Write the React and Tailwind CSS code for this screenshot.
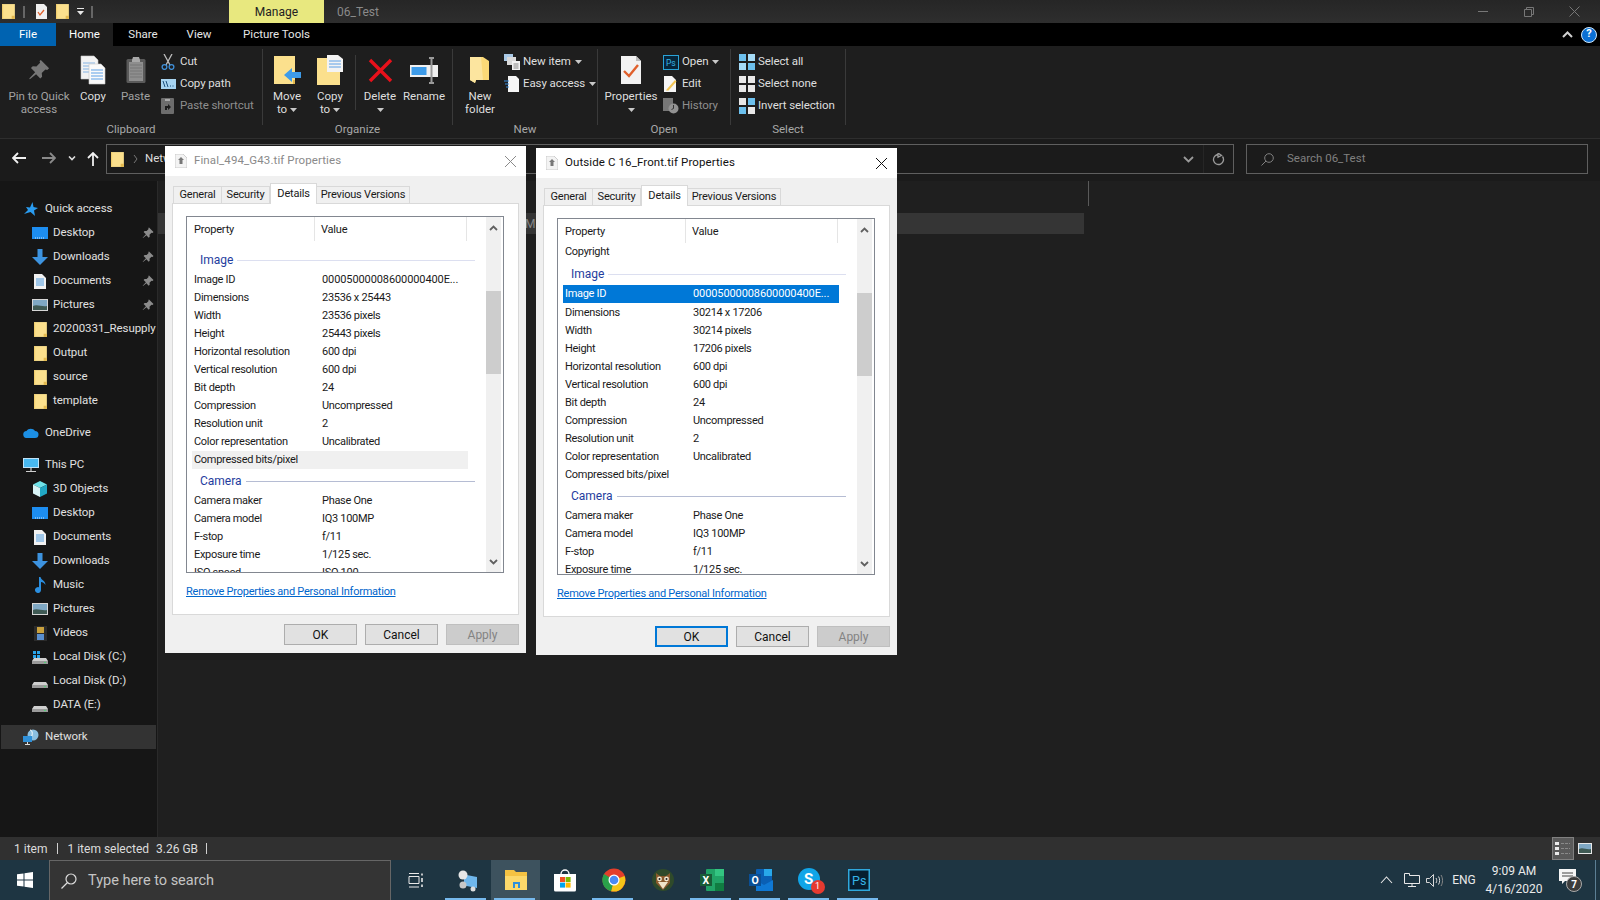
import React from "react";

const FONT = "font-['Roboto','Liberation_Sans',sans-serif]";

const Folder = ({ s = 16, className = "" }) => (
  <svg width={s} height={s} viewBox="0 0 16 16" className={className}>
    <path d="M2 1h12v14H2z" fill="#fbe08d" />
    <path d="M11 15v-3h3v3z" fill="#e3b94f" />
    <path d="M2 1h1v14H2z" fill="#f4cf6d" />
  </svg>
);

const Pin = ({ c = "#8b8b8b", s = 12 }) => (
  <svg width={s} height={s} viewBox="0 0 12 12">
    <path d="M7 0.5l4.5 4.5-1 1-1-.3-2 2 .2 2-1 1-2.3-2.4L1 11l-.3-.3 3.2-3.5-2.3-2.3 1-1 2 .2 2-2-.3-1z" fill={c} />
  </svg>
);

const CopyIco = () => (
  <svg width="26" height="30" viewBox="0 0 26 30">
    <path d="M1 1h13l4 4v19H1z" fill="#f3f3f3" stroke="#c9c9c9" strokeWidth=".6" />
    <path d="M3 8h12M3 11h12M3 14h8M3 17h8" stroke="#84b3e3" />
    <path d="M9 9h12l4 4v16H9z" fill="#fafafa" stroke="#c9c9c9" strokeWidth=".6" />
    <path d="M11 15h12M11 18h12M11 21h12M11 24h12" stroke="#5ca0e6" />
  </svg>
);

const PasteIco = () => (
  <svg width="20" height="28" viewBox="0 0 20 28">
    <rect x="0.5" y="3" width="19" height="24" rx="1.5" fill="#5a5a5a" />
    <rect x="3" y="6" width="14" height="19" fill="#8e8e8e" />
    <path d="M4 9h12M4 12h12M4 15h12M4 18h12M4 21h12" stroke="#777" />
    <path d="M6 4l1-3h6l1 3v2H6z" fill="#a8a8a8" />
  </svg>
);

const Caret = ({ className = "" }) => (
  <svg width="7" height="4" viewBox="0 0 7 4" className={`inline-block align-middle ${className}`}>
    <path d="M0 0h7L3.5 4z" fill="#c8c8c8" />
  </svg>
);

const Large = ({ w, label, label2, arrow, icon, dim }) => (
  <div className={`flex flex-col items-center shrink-0 ${w}`}>
    <div className="h-[32px] mt-[5px] flex items-center justify-center">{icon}</div>
    <div className={`mt-[4px] text-center text-[11.5px] leading-[13px] whitespace-nowrap ${dim ? "text-[#a2a2a2]" : "text-[#dedede]"}`}>
      <div>{label}</div>
      {label2 && (
        <div>
          {label2}
          {arrow && <Caret className="ml-[3px]" />}
        </div>
      )}
      {!label2 && arrow && <div className="h-[13px] flex items-center justify-center"><Caret /></div>}
    </div>
  </div>
);

const Small = ({ icon, label, dim, caret }) => (
  <div className="h-[22px] flex items-center whitespace-nowrap">
    <span className="w-[19px] h-[16px] flex items-center justify-start shrink-0">{icon}</span>
    <span className={`text-[11.5px] tracking-[-.1px] ${dim ? "text-[#8e8e8e]" : "text-[#dedede]"}`}>{label}</span>
    {caret && <Caret className="ml-[4px]" />}
  </div>
);

const Group = ({ w, label, children }) => (
  <div className={`relative flex flex-col shrink-0 ${w} border-r border-[#3a3a3a] h-[76px] mt-[3px]`}>
    <div className="flex h-full">{children}</div>
    <div className="absolute left-0 right-0 top-[73px] h-[16px] flex items-center justify-center text-[11.5px] text-[#a8a8a8]">{label}</div>
  </div>
);

const SelIco = ({ cells }) => (
  <svg width="16" height="16" viewBox="0 0 16 16">
    {[[0, 0], [9, 0], [0, 9], [9, 9]].map(([x, y], i) => (
      <rect key={i} x={x} y={y} width="7" height="7" fill={cells[i]} />
    ))}
  </svg>
);

const Ribbon = () => (
  <div className="h-[93px] bg-[#1e1e1e] border-b border-[#2e2e2e] flex items-start shrink-0">
    <Group w="w-[263px]" label="Clipboard">
      <div className="w-[4px]" />
      <Large w="w-[70px]" label="Pin to Quick" label2="access" dim icon={<svg width="22" height="22" viewBox="0 0 12 12"><path d="M7 0.5l4.5 4.5-1 1-1-.3-2 2 .2 2-1 1-2.3-2.4L1 11l-.3-.3 3.2-3.5-2.3-2.3 1-1 2 .2 2-2-.3-1z" fill="#777" /></svg>} />
      <Large w="w-[38px]" label="Copy" icon={<CopyIco />} />
      <Large w="w-[47px]" label="Paste" dim icon={<PasteIco />} />
      <div className="ml-[2px] mt-[2px] flex flex-col">
        <Small label="Cut" icon={<svg width="14" height="16" viewBox="0 0 14 16"><path d="M3 0l6 11M11 0L5 11" stroke="#bdbdbd" strokeWidth="1.3" /><circle cx="3.5" cy="13" r="2.4" fill="none" stroke="#3f8fd8" strokeWidth="1.3" /><circle cx="10.5" cy="13" r="2.4" fill="none" stroke="#3f8fd8" strokeWidth="1.3" /></svg>} />
        <Small label="Copy path" icon={<svg width="15" height="10" viewBox="0 0 15 10"><rect width="15" height="10" fill="#a8d4f0" /><path d="M2 2l2 6M5 2l2 6M9 7h1M11.5 7h1" stroke="#1b4e7a" /></svg>} />
        <Small label="Paste shortcut" dim icon={<svg width="13" height="16" viewBox="0 0 13 16"><rect width="13" height="16" rx="1" fill="#6d6d6d" /><path d="M4 1h5v2H4z" fill="#aaa" /><path d="M4 12V8h3V6l3 3-3 3v-2H6v2z" fill="#1c1c1c" /></svg>} />
      </div>
    </Group>
    <Group w="w-[190px]" label="Organize">
      <div className="w-[1px]" />
      <Large w="w-[46px]" label="Move" label2="to" arrow icon={<svg width="27" height="28" viewBox="0 0 27 28"><path d="M0 0h21v28H0z" fill="#fbe08d" /><path d="M19 24v4h2v-4z" fill="#e3b94f" /><path d="M10 20l8-7v4h9v6h-9v4z" fill="#3d9be9" transform="translate(0 -1)" /></svg>} />
      <Large w="w-[40px]" label="Copy" label2="to" arrow icon={<svg width="27" height="30" viewBox="0 0 27 30"><path d="M0 3h23v27H0z" fill="#fbe08d" /><path d="M10 0h11l5 4v13H10z" fill="#f3f3f3" /><path d="M12 6h12M12 9h12M12 12h12" stroke="#5ca0e6" /></svg>} />
      <div className="w-[7px] pl-[5px]"><div className="w-px h-[55px] mt-[6px] bg-[#3a3a3a]" /></div>
      <Large w="w-[46px]" label="Delete" arrow icon={<svg width="25" height="25" viewBox="0 0 25 25"><path d="M2 2l21 21M23 2L2 23" stroke="#e8111b" strokeWidth="3.4" /></svg>} />
      <Large w="w-[42px]" label="Rename" icon={<svg width="28" height="27" viewBox="0 0 28 27"><rect y="8" width="28" height="12" fill="#f0f0f0" /><rect x="1.500" y="10" width="15" height="8" fill="#3d9be9" /><path d="M19 1h5M21.500 1v25M19 26h5" stroke="#9a9a9a" strokeWidth="2" /></svg>} />
    </Group>
    <Group w="w-[145px]" label="New">
      <div className="w-[4px]" />
      <Large w="w-[46px]" label="New" label2="folder" icon={<svg width="20" height="28" viewBox="0 0 20 28"><path d="M0 1h13l6 4v19H6l-1 3-5-3z" fill="#fbd977" /><path d="M0 1h11l2 23H6l-1 3-5-3z" fill="#fce59f" /></svg>} />
      <div className="ml-[1px] mt-[2px] flex flex-col">
        <Small label="New item" caret icon={<svg width="16" height="16" viewBox="0 0 16 16"><rect y="0" width="9" height="7" fill="#a9c9e6" /><rect x="3" y="3" width="9" height="8" fill="#d9d9d9" /><rect x="8" y="7" width="8" height="9" fill="#f2f2f2" /><path d="M9.500 10h5M9.500 12h5M9.500 14h5" stroke="#888" /></svg>} />
        <Small label="Easy access" caret icon={<svg width="16" height="16" viewBox="0 0 16 16"><path d="M4 0h8l3 3v13H4z" fill="#f5f5f5" /><path d="M0 5h5M1 8h4M2 11h3" stroke="#3d8fe0" /></svg>} />
      </div>
    </Group>
    <Group w="w-[133px]" label="Open">
      <div className="w-[2px]" />
      <Large w="w-[62px]" label="Properties" arrow icon={<svg width="22" height="28" viewBox="0 0 22 28"><path d="M1 0h15l5 5v23H1z" fill="#f2f2f2" /><path d="M16 0v5h5z" fill="#bbb" /><path d="M4 15l5 5 9-11" stroke="#e0602c" strokeWidth="2.400" fill="none" /></svg>} />
      <div className="ml-[1px] mt-[2px] flex flex-col">
        <Small label="Open" caret icon={<svg width="16" height="15" viewBox="0 0 16 15"><rect x=".5" y=".5" width="15" height="14" fill="#07253a" stroke="#29a3d8" /><text x="3" y="11" fontSize="8.500" fontFamily="Roboto" fill="#36b4e8">Ps</text></svg>} />
        <Small label="Edit" icon={<svg width="14" height="16" viewBox="0 0 14 16"><path d="M1 0h8l4 4v12H1z" fill="#f5f5f5" /><path d="M4 13l8-9 1.500 1.500-8 9H3z" fill="#f1c453" /></svg>} />
        <Small label="History" dim icon={<svg width="16" height="16" viewBox="0 0 16 16"><rect width="10" height="13" fill="#777" /><circle cx="10.500" cy="10.500" r="5" fill="#929292" /><path d="M10.500 7v3.500l-2 1" stroke="#333" fill="none" /></svg>} />
      </div>
    </Group>
    <Group w="w-[115px]" label="Select">
      <div className="ml-[8px] mt-[2px] flex flex-col">
        <Small label="Select all" icon={<SelIco cells={["#6cc0ee", "#a5dbf7", "#a5dbf7", "#6cc0ee"]} />} />
        <Small label="Select none" icon={<SelIco cells={["#e8e8e8", "#e8e8e8", "#e8e8e8", "#e8e8e8"]} />} />
        <Small label="Invert selection" icon={<SelIco cells={["#e8e8e8", "#6cc0ee", "#6cc0ee", "#e8e8e8"]} />} />
      </div>
    </Group>
  </div>
);

const TitleBar = () => (
  <div className="h-[23px] bg-gradient-to-b from-[#262626] to-[#2e2e2e] flex items-center shrink-0 relative">
    <Folder s={17} />
    <div className="ml-[6px] w-[2px] h-[12px] bg-[#666]" />
    <svg width="13" height="15" viewBox="0 0 13 15" className="ml-[10px]"><path d="M1 0h8l3 3v12H1z" fill="#f0f0f0" /><path d="M3 8l2 3 4-5" stroke="#e0602c" strokeWidth="1.300" fill="none" /></svg>
    <Folder s={17} className="ml-[6px]" />
    <svg width="7" height="7" viewBox="0 0 7 7" className="ml-[6px]"><path d="M0 0h7v1H0zM0 3h7L3.500 7z" fill="#e8e8e8" /></svg>
    <div className="ml-[7px] w-[2px] h-[12px] bg-[#666]" />
    <div className="ml-[136px] w-[95px] h-full bg-[#e8e87f] flex items-center justify-center text-[12px] text-[#222]">Manage</div>
    <div className="ml-[13px] text-[12px] text-[#8a8a8a]">06_Test</div>
    <div className="ml-auto flex items-center">
      <div className="w-[46px] flex justify-center"><div className="w-[10px] h-px bg-[#777]" /></div>
      <div className="w-[46px] flex justify-center">
        <svg width="10" height="10" viewBox="0 0 10 10"><path d="M.5 2.500h7v7h-7zM2.500 2.500v-2h7v7h-2" fill="none" stroke="#777" /></svg>
      </div>
      <div className="w-[45px] flex justify-center mr-[3px]">
        <svg width="11" height="11" viewBox="0 0 11 11"><path d="M.5.5l10 10M10.500.5l-10 10" stroke="#777" /></svg>
      </div>
    </div>
  </div>
);

const Tabs = () => (
  <div className="h-[23px] bg-black flex items-center text-[11.5px] text-[#e6e6e6] shrink-0">
    <div className="w-[56px] h-full bg-[#0063b1] flex items-center justify-center text-white">File</div>
    <div className="w-[57px] h-full bg-[#1e1e1e] flex items-center justify-center text-white">Home</div>
    <div className="w-[60px] text-center">Share</div>
    <div className="w-[52px] text-center">View</div>
    <div className="w-[95px] text-center ml-[4px]">Picture Tools</div>
    <div className="ml-auto mr-[8px]">
      <svg width="11" height="7" viewBox="0 0 11 7"><path d="M1 6l4.500-4.500L10 6" stroke="#d0d0d0" strokeWidth="2" fill="none" /></svg>
    </div>
    <div className="mr-[3px] w-[16px] h-[16px] rounded-full bg-[#0b6fd3] border border-[#cfe6fa] text-white text-[11px] font-bold flex items-center justify-center">?</div>
  </div>
);

const Nav = () => (
  <div className="h-[42px] bg-[#1b1b1b] flex items-start pt-[5px] shrink-0 relative border-b border-transparent">
    <svg width="14" height="12" viewBox="0 0 14 12" className="ml-[12px] mt-[8px]"><path d="M6 1L1 6l5 5M1 6h13" stroke="#f0f0f0" strokeWidth="1.800" fill="none" /></svg>
    <svg width="14" height="12" viewBox="0 0 14 12" className="ml-[16px] mt-[8px]"><path d="M8 1l5 5-5 5M13 6H0" stroke="#8a8a8a" strokeWidth="1.800" fill="none" /></svg>
    <svg width="8" height="5" viewBox="0 0 8 5" className="ml-[12px] mt-[12px]"><path d="M1 .5l3 3 3-3" stroke="#dcdcdc" strokeWidth="1.600" fill="none" /></svg>
    <svg width="12" height="14" viewBox="0 0 12 14" className="ml-[11px] mt-[8px]"><path d="M1 6l5-5 5 5M6 1v13" stroke="#f0f0f0" strokeWidth="1.800" fill="none" /></svg>
    <div className="ml-[7px] w-[1128px] h-[30px] border border-[#5f5f5f] flex items-center text-[11.5px] text-[#dcdcdc]">
      <Folder s={17} className="ml-[2px]" />
      <svg width="5" height="8" viewBox="0 0 5 8" className="ml-[7px]"><path d="M1 0l3 4-3 4" stroke="#777" fill="none" /></svg>
      <span className="ml-[7px]">Network</span>
      <svg width="11" height="7" viewBox="0 0 11 7" className="ml-auto mr-[9px]"><path d="M1 1l4.500 4.500L10 1" stroke="#9a9a9a" strokeWidth="1.800" fill="none" /></svg>
      <div className="w-px h-full bg-[#262626]" />
      <svg width="13" height="13" viewBox="0 0 13 13" className="mx-[8px]"><path d="M10.500 3.500A5 5 0 1 1 6.500 1.500M6 0v4.200l3.500-1.700z" stroke="#9a9a9a" strokeWidth="1.300" fill="none" /></svg>
    </div>
    <div className="ml-[12px] w-[342px] h-[30px] border border-[#5f5f5f] flex items-center text-[11.5px] text-[#808080]">
      <svg width="13" height="13" viewBox="0 0 13 13" className="ml-[14px]"><circle cx="8" cy="5" r="4.300" fill="none" stroke="#808080" /><path d="M5 8l-4.500 4.500" stroke="#808080" /></svg>
      <span className="ml-[13px]">Search 06_Test</span>
    </div>
  </div>
);

const Desk = () => <svg width="16" height="12" viewBox="0 0 16 12"><rect width="16" height="12" fill="#1d8df0" /><path d="M3 11h10" stroke="#cfe8ff" strokeDasharray="1 1" /></svg>;
const Down = () => <svg width="16" height="16" viewBox="0 0 16 16"><path d="M5.500 0h5v8H16l-8 8-8-8h5.500z" fill="#3d93df" /></svg>;
const Docs = () => <svg width="12" height="15" viewBox="0 0 12 15"><path d="M0 0h8l4 4v11H0z" fill="#f1f1f1" /><path d="M2 5h8M2 7h8M2 9h8M2 11h8" stroke="#4f9ce0" /></svg>;
const Pics = () => <svg width="16" height="12" viewBox="0 0 16 12"><rect width="16" height="12" fill="#d6d6d6" /><rect x="1" y="1" width="14" height="10" fill="#7fa8c4" /><path d="M1 7c4-2 9 1 14 0v4H1z" fill="#3f5a54" /></svg>;
const Disk = ({ win }) => <svg width="16" height="14" viewBox="0 0 16 14"><path d="M2 8h12l2 3v3H0v-3z" fill="#cfcfcf" /><rect x="0" y="11" width="16" height="3" fill="#9a9a9a" /><circle cx="13" cy="12.500" r=".8" fill="#3fe06e" />{win && <path d="M1 1h3v3H1zM5 1h3v3H5zM1 5h3v3H1zM5 5h3v3H5z" fill="#29a3e8" />}</svg>;

const TreeRow = ({ label, icon, pin, top, active, mt }) => (
  <div className={`h-[24px] flex items-center whitespace-nowrap ${mt || ""} ${active ? "bg-[#333] h-[22px] my-px w-[155px] ml-[1px]" : ""}`}>
    <span className={`flex justify-center shrink-0 ${top ? (active ? "ml-[20px]" : "ml-[21px]") : "ml-[30px]"} w-[20px]`}>{icon}</span>
    <span className={`text-[11.5px] tracking-[-.05px] text-[#e0e0e0] ${top ? "ml-[4px]" : "ml-[3px]"}`}>{label}</span>
    {pin && <span className="ml-auto mr-[3px]"><Pin /></span>}
  </div>
);

const Sidebar = () => (
  <div className="w-[158px] shrink-0 bg-[#161616] border-r border-[#2a2a2a] pt-[16px] overflow-hidden">
    <TreeRow top label="Quick access" icon={<svg width="14" height="14" viewBox="0 0 14 14"><path d="M8.500 0l1 5 4.500 1-4 2.500L11 14 6.500 10 0 12l4-4-2-3 4 .5z" fill="#2a9cf0" /></svg>} />
    <TreeRow label="Desktop" icon={<Desk />} pin />
    <TreeRow label="Downloads" icon={<Down />} pin />
    <TreeRow label="Documents" icon={<Docs />} pin />
    <TreeRow label="Pictures" icon={<Pics />} pin />
    <TreeRow label="20200331_Resupply" icon={<Folder s={17} />} />
    <TreeRow label="Output" icon={<Folder s={17} />} />
    <TreeRow label="source" icon={<Folder s={17} />} />
    <TreeRow label="template" icon={<Folder s={17} />} />
    <TreeRow top mt="mt-[8px]" label="OneDrive" icon={<svg width="16" height="10" viewBox="0 0 16 10"><path d="M4 10a3.500 3.500 0 0 1-.5-7A5 5 0 0 1 12 3a3.500 3.500 0 0 1 0 7z" fill="#1c8fe4" /></svg>} />
    <TreeRow top mt="mt-[8px]" label="This PC" icon={<svg width="16" height="14" viewBox="0 0 16 14"><rect width="16" height="10" fill="#bfe2f8" /><rect x="1" y="1" width="14" height="8" fill="#48b8f0" /><path d="M8 10v3M3 13.500h10" stroke="#cfcfcf" strokeWidth="1.200" /></svg>} />
    <TreeRow label="3D Objects" icon={<svg width="16" height="16" viewBox="0 0 16 16"><path d="M8 0l7 3.500L8 7 1 3.500z" fill="#6fe3ea" /><path d="M1 3.500L8 7v9l-7-3.500z" fill="#d8f4f6" /><path d="M15 3.500L8 7v9l7-3.500z" fill="#21a7c4" /></svg>} />
    <TreeRow label="Desktop" icon={<Desk />} />
    <TreeRow label="Documents" icon={<Docs />} />
    <TreeRow label="Downloads" icon={<Down />} />
    <TreeRow label="Music" icon={<svg width="11" height="16" viewBox="0 0 11 16"><path d="M4 0h1.500c.5 3 5 3.500 5 8-1-2-3-3-4.500-3v8a3 3 0 1 1-2-2.800z" fill="#2b8fe0" /></svg>} />
    <TreeRow label="Pictures" icon={<Pics />} />
    <TreeRow label="Videos" icon={<svg width="13" height="15" viewBox="0 0 13 15"><rect width="13" height="15" fill="#2b2b2b" /><rect x="3" y="1" width="7" height="6" fill="#c9a13e" /><rect x="3" y="8" width="7" height="6" fill="#5a8fcf" /></svg>} />
    <TreeRow label="Local Disk (C:)" icon={<Disk win />} />
    <TreeRow label="Local Disk (D:)" icon={<Disk />} />
    <TreeRow label="DATA (E:)" icon={<Disk />} />
    <div className="h-[7px]" />
    <TreeRow top active label="Network" icon={<svg width="16" height="16" viewBox="0 0 16 16"><circle cx="10" cy="6" r="5.500" fill="#8bbfe0" /><path d="M7 1c3 0 3 6 0 9" stroke="#fff" fill="none" /><rect y="7" width="9" height="6" fill="#2f90d8" /><path d="M4.500 13v2M2 15.500h5" stroke="#ddd" /></svg>} />
  </div>
);

const Row = ({ k, v, sel, hl, id }) => (
  <div className={`h-[18px] flex items-center text-[11px] tracking-[-.3px] ${sel ? "bg-[#0078d7] text-white h-[17px] mb-px" : "text-[#1a1a1a]"} ${hl ? "bg-[#f0f0f0]" : ""} w-[276px] ml-[5px] shrink-0`}>
    <span className="w-[130px] pl-[2px] shrink-0 whitespace-nowrap">{k}</span>
    <span className={`whitespace-nowrap ${id ? "tracking-[-.1px]" : ""}`}>{v}</span>
  </div>
);

const Sect = ({ label, mt = "", mb = "", c }) => (
  <div className={`h-[18px] flex items-center ml-[13px] w-[275px] shrink-0 ${mt} ${mb}`}>
    <span className="text-[12px] text-[#1f3d9e] shrink-0">{label}</span>
    <div className={`ml-[4px] flex-1 h-px ${c}`} />
  </div>
);

const Dlg = ({ title, active, pos, body }) => (
  <div className={`absolute ${pos} w-[361px] h-[507px] bg-[#f0f0f0] flex flex-col ${FONT}`}>
    <div className="h-[30px] bg-white shrink-0 flex items-center">
      <svg width="12" height="14" viewBox="0 0 12 14" className="ml-[10px]"><path d="M0 0h8l4 4v10H0z" fill="#f3f3f3" stroke="#bbb" strokeWidth=".7" /><path d="M6 3l3 3H7.500v4h-3V6H3z" fill="#777" /></svg>
      <span className={`ml-[7px] text-[11.5px] tracking-[.1px] ${active ? "text-[#111]" : "text-[#8a8a8a]"}`}>{title}</span>
      <svg width="13" height="13" viewBox="0 0 13 13" className="ml-auto mr-[9px]"><path d="M1 1l11 11M12 1L1 12" stroke={active ? "#111" : "#8a8a8a"} /></svg>
    </div>
    <div className="h-[27px] shrink-0 flex items-end pl-[8px] text-[11px] tracking-[-.2px] text-[#1a1a1a] relative z-10 whitespace-nowrap">
      <div className="h-[17px] w-[49px] border border-[#d9d9d9] border-b-0 flex items-center justify-center">General</div>
      <div className="h-[17px] w-[48px] border-t border-r border-[#d9d9d9] flex items-center justify-center">Security</div>
      <div className="h-[21px] w-[47px] bg-white border-x border-t border-[#d9d9d9] -mb-px flex items-start pt-[2px] justify-center">Details</div>
      <div className="h-[17px] w-[93px] border-t border-r border-[#d9d9d9] flex items-center justify-center">Previous Versions</div>
    </div>
    <div className="mx-[7px] h-[412px] bg-white border border-[#d9d9d9] shrink-0 pl-[13px] pt-[12px]">
      <div className="w-[318px] h-[357px] border border-[#828790] flex overflow-hidden relative pr-[2px]">
        <div className="flex flex-col w-[299px] overflow-hidden">
          <div className="h-[22px] flex text-[11px] tracking-[-.2px] text-[#1a1a1a] shrink-0 items-start relative">
            <span className="w-[128px] pl-[7px] border-r border-[#e5e5e5] h-[24px] pt-[5px]">Property</span>
            <span className="w-[152px] pl-[6px] border-r border-[#e5e5e5] h-[24px] pt-[5px]">Value</span>
          </div>
          {body}
        </div>
        <div className="w-[15px] bg-[#f0f0f0] flex flex-col items-center relative ml-auto">
          <svg width="9" height="6" viewBox="0 0 9 6" className="mt-[8px]"><path d="M1 5l3.500-3.500L8 5" stroke="#606060" strokeWidth="1.800" fill="none" /></svg>
          <div className="w-[15px] h-[83px] bg-[#cdcdcd] mt-[60px]" />
          <svg width="9" height="6" viewBox="0 0 9 6" className="mt-auto mb-[7px]"><path d="M1 1l3.500 3.500L8 1" stroke="#606060" strokeWidth="1.800" fill="none" /></svg>
        </div>
      </div>
      <div className="mt-[11px] text-[11px] tracking-[-.24px] text-[#0066cc] underline whitespace-nowrap">Remove Properties and Personal Information</div>
    </div>
    <div className="flex justify-end gap-[8px] pr-[7px] pt-[9px] text-[12px]">
      <div className={`w-[73px] h-[21px] bg-[#e1e1e1] flex items-center justify-center text-[#111] border ${active ? "border-[#0078d7] border-2" : "border-[#adadad]"}`}>OK</div>
      <div className="w-[73px] h-[21px] bg-[#e1e1e1] border border-[#adadad] flex items-center justify-center text-[#111]">Cancel</div>
      <div className="w-[73px] h-[21px] bg-[#cccccc] border border-[#bfbfbf] flex items-center justify-center text-[#838383]">Apply</div>
    </div>
  </div>
);

const Common = () => (
  <>
    <Row k="Horizontal resolution" v="600 dpi" />
    <Row k="Vertical resolution" v="600 dpi" />
    <Row k="Bit depth" v="24" />
    <Row k="Compression" v="Uncompressed" />
    <Row k="Resolution unit" v="2" />
    <Row k="Color representation" v="Uncalibrated" />
  </>
);

const Body1 = (
  <>
    <div className="h-[12px] shrink-0" />
    <Sect label="Image" c="bg-[#dcdff0]" mb="mb-[2px]" />
    <Row k="Image ID" v="00005000008600000400E..." id />
    <Row k="Dimensions" v="23536 x 25443" />
    <Row k="Width" v="23536 pixels" />
    <Row k="Height" v="25443 pixels" />
    {Common()}
    <Row k="Compressed bits/pixel" v="" hl />
    <Sect label="Camera" c="bg-[#b5bcd3]" mt="mt-[3px]" mb="mb-[2px]" />
    <Row k="Camera maker" v="Phase One" />
    <Row k="Camera model" v="IQ3 100MP" />
    <Row k="F-stop" v="f/11" />
    <Row k="Exposure time" v="1/125 sec." />
    <Row k="ISO speed" v="ISO 100" />
  </>
);

const Body2 = (
  <>
    <div className="h-[2px] shrink-0" />
    <Row k="Copyright" v="" />
    <Sect label="Image" c="bg-[#dcdff0]" mt="mt-[4px]" mb="mb-[2px]" />
    <Row k="Image ID" v="00005000008600000400E..." sel id />
    <Row k="Dimensions" v="30214 x 17206" />
    <Row k="Width" v="30214 pixels" />
    <Row k="Height" v="17206 pixels" />
    {Common()}
    <Row k="Compressed bits/pixel" v="" />
    <Sect label="Camera" c="bg-[#b5bcd3]" mt="mt-[3px]" mb="mb-[2px]" />
    <Row k="Camera maker" v="Phase One" />
    <Row k="Camera model" v="IQ3 100MP" />
    <Row k="F-stop" v="f/11" />
    <Row k="Exposure time" v="1/125 sec." />
  </>
);

const TB = ({ w = "w-[49px]", on, active, children }) => (
  <div className={`${w} h-full relative flex items-center justify-center shrink-0 ${active ? "bg-[#3d525e]" : ""}`}>
    {children}
    {on && <div className="absolute bottom-0 left-[3px] right-[5px] h-[2px] bg-[#76b9ed]" />}
  </div>
);

const Taskbar = () => (
  <div className="h-[40px] bg-[#1e3542] flex items-center shrink-0 relative">
    <div className="w-[49px] flex justify-center">
      <svg width="16" height="16" viewBox="0 0 16 16"><path d="M0 2.300L6.500 1.400V7.500H0zM7.500 1.300L16 0V7.500H7.500zM0 8.500H6.500V14.600L0 13.700zM7.500 8.500H16V16L7.500 14.700z" fill="#fff" /></svg>
    </div>
    <div className="w-[342px] h-full bg-[#343434] border border-[#666] border-b-0 flex items-center">
      <svg width="16" height="16" viewBox="0 0 16 16" className="ml-[11px]"><circle cx="10" cy="6" r="5" fill="none" stroke="#dcdcdc" strokeWidth="1.200" /><path d="M6.500 9.500L.5 15.500" stroke="#dcdcdc" strokeWidth="1.200" /></svg>
      <span className="ml-[11px] text-[14.5px] text-[#c4c4c4] whitespace-nowrap">Type here to search</span>
    </div>
    <div className="w-[49px] flex justify-center">
      <svg width="16" height="15" viewBox="0 0 16 15"><path d="M1 3.500h10v7H1zM1 .5h10M1 14h10" fill="none" stroke="#e8e8e8" /><path d="M14 .5v2M14 5v4M14 11.500V14" stroke="#e8e8e8" strokeWidth="1.600" /></svg>
    </div>
    <div className="flex h-full ml-[2px]">
      <TB on><svg width="24" height="24" viewBox="0 0 24 24"><rect x="9" y="5" width="13" height="11" fill="#6fb7ec" transform="skewY(10)" /><circle cx="8" cy="7" r="4.500" fill="#e6e6e6" /><circle cx="8" cy="17" r="3.500" fill="#c8c8c8" /><circle cx="18" cy="21" r="2.500" fill="#ddd" /></svg></TB>
      <TB on active><svg width="22" height="20" viewBox="0 0 22 20"><path d="M0 0h9l2 2h11v18H0z" fill="#f5c242" /><path d="M0 6h22v14H0z" fill="#fcd86a" /><rect x="8" y="12" width="7" height="6" fill="#2f8fdc" /><rect x="10" y="14" width="3" height="4" fill="#fcd86a" /></svg></TB>
      <TB><svg width="24" height="24" viewBox="0 0 24 24"><path d="M8 6a4 4 0 0 1 8 0" stroke="#fff" strokeWidth="1.300" fill="none" /><path d="M1 6h22v16a1.500 1.500 0 0 1-1.500 1.500h-19A1.500 1.500 0 0 1 1 22z" fill="#fff" /><rect x="7" y="9" width="5" height="5" fill="#f25022" /><rect x="12.600" y="9" width="5" height="5" fill="#7fba00" /><rect x="7" y="14.600" width="5" height="5" fill="#00a4ef" /><rect x="12.600" y="14.600" width="5" height="5" fill="#ffb900" /></svg></TB>
      <TB on><svg width="24" height="24" viewBox="0 0 24 24"><circle cx="12" cy="12" r="11.500" fill="#e33e2b" /><path d="M12 12L22.500 8A11.500 11.500 0 0 1 9 23.200z" fill="#f5c518" /><path d="M12 12L9 23.200A11.500 11.500 0 0 1 2 6z" fill="#2aa14a" /><circle cx="12" cy="12" r="5.500" fill="#fff" /><circle cx="12" cy="12" r="4.300" fill="#4a8af4" /></svg></TB>
      <TB><svg width="22" height="22" viewBox="0 0 22 22"><circle cx="11" cy="11" r="11" fill="#2f4a2a" /><path d="M4 4l4 3h6l4-3v10l-7 7-7-7z" fill="#8a5a2c" /><path d="M6 13h10l-5 7z" fill="#f0e4c8" /><circle cx="7.500" cy="10" r="2.400" fill="#f4ecd4" /><circle cx="14.500" cy="10" r="2.400" fill="#f4ecd4" /><circle cx="7.500" cy="10" r="1" fill="#222" /><circle cx="14.500" cy="10" r="1" fill="#222" /></svg></TB>
      <TB on><svg width="24" height="22" viewBox="0 0 24 22"><rect x="6" y="0" width="18" height="22" rx="1" fill="#21a366" /><rect x="15" y="0" width="9" height="7" fill="#33c481" /><rect x="15" y="14" width="9" height="8" fill="#107c41" /><rect x="0" y="5" width="12" height="12" fill="#185c37" /><text x="2.500" y="15" fontSize="10.500" fontWeight="700" fontFamily="Roboto" fill="#fff">X</text></svg></TB>
      <TB on><svg width="24" height="22" viewBox="0 0 24 22"><rect x="7" y="0" width="16" height="22" rx="1" fill="#0a5fb4" /><rect x="15" y="0" width="8" height="7" fill="#28a8ea" /><path d="M7 11l8 5 9-5v11H7z" fill="#0f78d4" /><rect x="0" y="5" width="12" height="12" fill="#0a4f95" /><text x="2.500" y="15" fontSize="10.500" fontWeight="700" fontFamily="Roboto" fill="#fff">O</text></svg></TB>
      <TB on><div className="relative w-[24px] h-[24px]"><div className="w-[22px] h-[22px] rounded-full bg-[#10a5e8] text-white text-[15px] font-bold flex items-center justify-center">S</div><div className="absolute -right-[3px] -bottom-[2px] w-[14px] h-[14px] rounded-full bg-[#e63a30] text-white text-[9px] flex items-center justify-center">1</div></div></TB>
      <TB on><svg width="22" height="22" viewBox="0 0 22 22"><rect x=".75" y=".75" width="20.500" height="20.500" fill="#061e30" stroke="#2fa8dd" strokeWidth="1.500" /><text x="4" y="15.500" fontSize="12.500" fontFamily="Roboto" fill="#36b4e8">Ps</text></svg></TB>
    </div>
    <div className="ml-auto flex items-center h-full text-[#eaeaea]">
      <svg width="13" height="8" viewBox="0 0 13 8" className="mr-[11px]"><path d="M1 7l5.500-6L12 7" stroke="#e8e8e8" fill="none" strokeWidth="1.100" /></svg>
      <svg width="16" height="14" viewBox="0 0 16 14" className="mr-[6px]"><path d="M.5.5h5v2h10v8H.5zM8 10.500v3M4 13.500h8" fill="none" stroke="#e8e8e8" /></svg>
      <svg width="17" height="13" viewBox="0 0 17 13" className="mr-[8px]"><path d="M.5 4.500h3l4-4v12l-4-4h-3zM10 4c1 1.500 1 3.500 0 5M12.500 2.500c1.500 2 1.500 6 0 8" fill="none" stroke="#d8d8d8" /><path d="M15 1c2 3 2 8 0 11" fill="none" stroke="#888" /></svg>
      <span className="text-[12px] w-[26px] text-center">ENG</span>
      <div className="ml-[7px] w-[60px] text-center text-[12px] leading-[18px] whitespace-nowrap">
        <div>9:09 AM</div>
        <div>4/16/2020</div>
      </div>
      <div className="relative ml-[15px] mr-[19px] w-[22px] h-[24px]">
        <svg width="17" height="15" viewBox="0 0 17 15" className="absolute left-0 top-[1px]"><path d="M0 0h17v12H6l-3 3v-3H0z" fill="#f5f5f5" /><path d="M3 4h11M3 7h11" stroke="#444" /></svg>
        <div className="absolute left-[7px] top-[8px] w-[16px] h-[16px] rounded-full bg-[#3c3c3c] border border-[#aaa] text-white text-[10px] font-bold flex items-center justify-center">7</div>
      </div>
      <div className="absolute right-[4px] top-0 h-full w-px bg-[#5c7f94]" />
    </div>
  </div>
);

const Status = () => (
  <div className="h-[23px] bg-[#303030] flex items-center text-[12px] text-[#dcdcdc] shrink-0">
    <span className="ml-[14px]">1 item</span>
    <div className="ml-[10px] w-px h-[11px] bg-[#d0d0d0]" />
    <span className="ml-[9px]">1 item selected</span>
    <span className="ml-[7px]">3.26 GB</span>
    <div className="ml-[8px] w-px h-[11px] bg-[#d0d0d0]" />
    <div className="ml-auto mr-[4px] w-[22px] h-[23px] bg-[#5a5a5a] border border-[#808080] flex items-center justify-center">
      <svg width="16" height="13" viewBox="0 0 16 13"><path d="M0 0h4v3H0zM0 5h4v3H0zM0 10h4v3H0z" fill="#ececec" /><path d="M6 1.500h9M6 6.500h9M6 11.500h9" stroke="#8a8a8a" strokeDasharray="3 1" /></svg>
    </div>
    <svg width="14" height="11" viewBox="0 0 14 11" className="mr-[8px]"><rect width="14" height="11" fill="#e8e8e8" /><rect x="1" y="1" width="12" height="9" fill="#7fa8c4" /><path d="M1 6c4-2 7 1 12 0v4H1z" fill="#3f5a54" /></svg>
  </div>
);

export default function App() {
  return (
    <div className={`relative w-[1600px] h-[900px] overflow-hidden flex flex-col bg-[#1f1f1f] ${FONT}`}>
      <TitleBar />
      <Tabs />
      <Ribbon />
      <Nav />
      <div className="flex flex-1 min-h-0">
        <Sidebar />
        <div className="flex-1 bg-[#1f1f1f] min-w-0 relative">
          <div className="h-[26px] flex items-start justify-end">
            <div className="w-px h-[25px] bg-[#5a5a5a] mr-[511px]" />
          </div>
          <div className="mt-[6px] h-[21px] bg-[#353535] w-[926px] flex items-center text-[12px] text-[#888] pl-[367px]">M</div>
        </div>
      </div>
      <Status />
      <Taskbar />
      <Dlg pos="left-[165px] top-[146px]" title="Final_494_G43.tif Properties" body={Body1} />
      <Dlg pos="left-[536px] top-[148px]" title="Outside C 16_Front.tif Properties" active body={Body2} />
    </div>
  );
}
